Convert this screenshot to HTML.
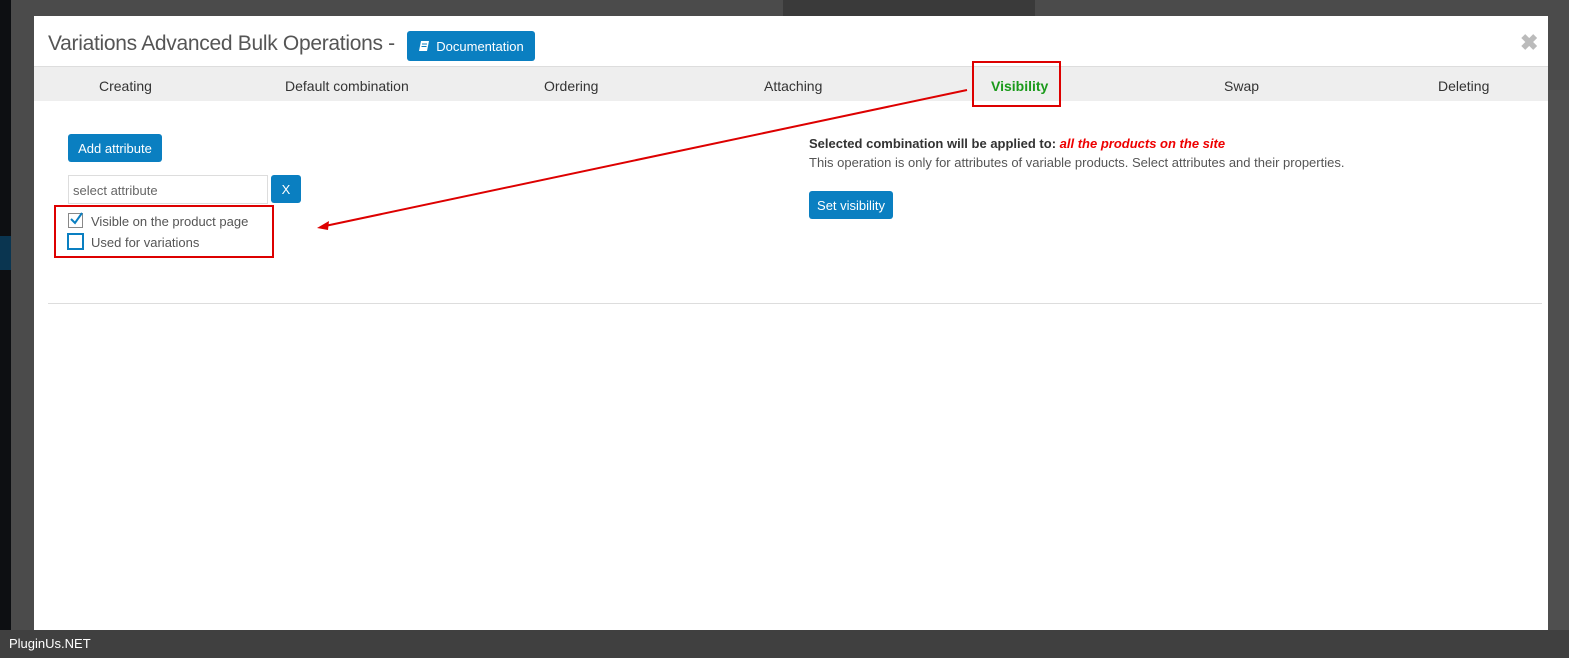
<!DOCTYPE html>
<html><head><meta charset="utf-8"><style>
*{box-sizing:border-box;margin:0;padding:0}
body{width:1569px;height:658px;overflow:hidden;background:#4b4b4b;font-family:"Liberation Sans",sans-serif;position:relative}
.abs{position:absolute}
.btn{position:absolute;background:#0a7fc1;color:#fff;border-radius:3px;font-size:13px;display:flex;align-items:center;justify-content:center}
.tab{position:absolute;top:78px;font-size:14px;color:#333;text-align:center}
</style></head><body>
<div class="abs" style="left:0;top:0;width:11px;height:630px;background:#0d0f12"></div>
<div class="abs" style="left:0;top:236px;width:11px;height:34px;background:#0a3550"></div>
<div class="abs" style="left:783px;top:0;width:252px;height:16px;background:#3a3a3a"></div>
<div class="abs" style="left:1548px;top:90px;width:21px;height:540px;background:#4f4f4f"></div>
<div class="abs" style="left:0;top:630px;width:1569px;height:28px;background:#404040;color:#fff;font-size:13px;padding:6px 0 0 9px">PluginUs.NET</div>

<div class="abs" style="left:34px;top:16px;width:1514px;height:614px;background:#fff"></div>
<div class="abs" style="left:48px;top:32px;font-size:21px;color:#555;letter-spacing:-0.3px;white-space:nowrap">Variations Advanced Bulk Operations -</div>
<div class="btn" style="left:407px;top:31px;width:128px;height:30px;font-size:13px">
<svg width="12" height="12" viewBox="0 0 12 12" style="margin-right:6px"><path d="M3 1h8l-2 10H1z" fill="#fff"/><path d="M4 4h5M3.5 6.5h5" stroke="#0a7fc1" stroke-width="1"/></svg>Documentation</div>
<div class="abs" style="left:1520px;top:30px;font-size:22px;color:#bbb;font-weight:bold">✖</div>
<div class="abs" style="left:34px;top:66px;width:1514px;height:35px;background:#eee;border-top:1px solid #ddd"></div>
<div class="tab" style="left:99px">Creating</div>
<div class="tab" style="left:285px">Default combination</div>
<div class="tab" style="left:544px">Ordering</div>
<div class="tab" style="left:764px">Attaching</div>
<div class="tab" style="left:991px;color:#1a9a1a;font-weight:bold">Visibility</div>
<div class="tab" style="left:1224px">Swap</div>
<div class="tab" style="left:1438px">Deleting</div>
<div class="abs" style="left:972px;top:61px;width:89px;height:46px;border:2px solid #d00"></div>

<div class="btn" style="left:68px;top:134px;width:94px;height:28px">Add attribute</div>
<div class="abs" style="left:68px;top:175px;width:200px;height:29px;border:1px solid #ddd;font-size:13px;color:#666;padding:7px 0 0 4px">select attribute</div>
<div class="btn" style="left:271px;top:175px;width:30px;height:28px">X</div>
<div class="abs" style="left:68px;top:213px;width:15px;height:15px;border:1px solid #888;background:#fff"></div>
<svg class="abs" style="left:69px;top:212px" width="14" height="14"><path d="M2 7l4 4 7-10" stroke="#0a7fc1" stroke-width="2" fill="none"/></svg>
<div class="abs" style="left:91px;top:214px;font-size:13px;color:#555">Visible on the product page</div>
<div class="abs" style="left:67px;top:233px;width:17px;height:17px;border:2px solid #0a7fc1"></div>
<div class="abs" style="left:91px;top:235px;font-size:13px;color:#555">Used for variations</div>
<div class="abs" style="left:54px;top:205px;width:220px;height:53px;border:2px solid #d00"></div>

<div class="abs" style="left:809px;top:136px;font-size:13px;color:#333;font-weight:bold">Selected combination will be applied to: <span style="color:#e00;font-style:italic">all the products on the site</span></div>
<div class="abs" style="left:809px;top:155px;font-size:13px;color:#555;white-space:nowrap">This operation is only for attributes of variable products. Select attributes and their properties.</div>
<div class="btn" style="left:809px;top:191px;width:84px;height:28px">Set visibility</div>
<div class="abs" style="left:48px;top:303px;width:1494px;height:1px;background:#ddd"></div>

<svg class="abs" style="left:0;top:0" width="1569" height="658"><line x1="967" y1="90" x2="325" y2="226" stroke="#d00" stroke-width="2"/><path d="M317 228l12-7-1 9z" fill="#d00"/></svg>
</body></html>
